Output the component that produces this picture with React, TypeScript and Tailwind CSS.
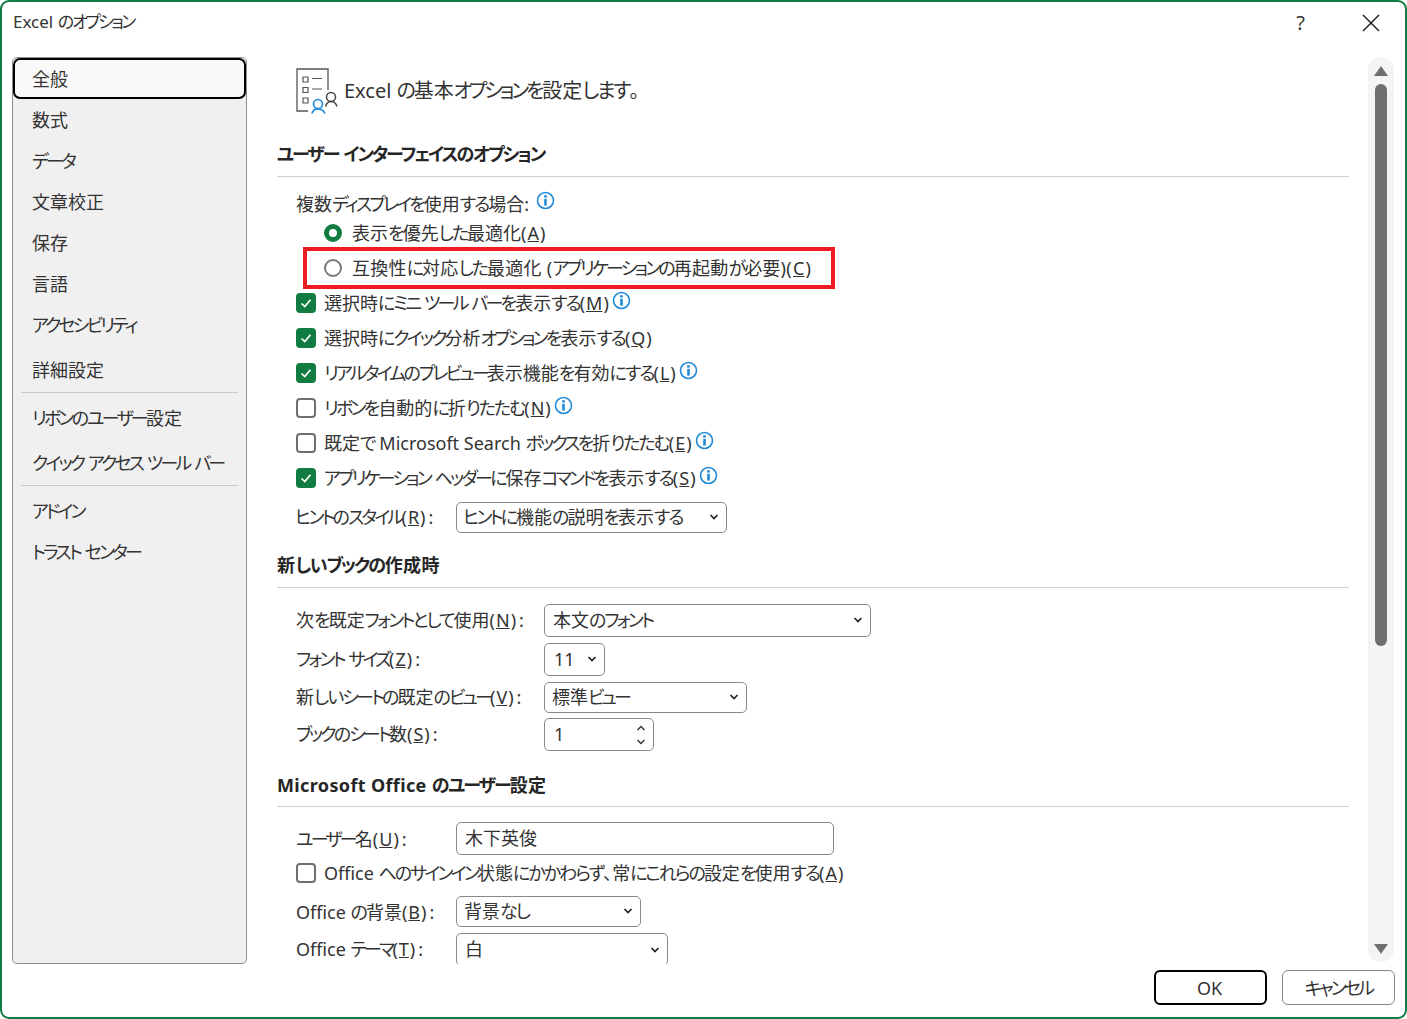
import React from 'react';

// Meiryo UI sets kana narrower than kanji, so kana runs get their own tracking
function T({ s, bold }: { s: string; bold?: boolean }) {
    const parts = s.split(/([\u30A0-\u30FF]+|[\u3040-\u309F]+)/).filter(Boolean);
    return (
        <span>
            {parts.map((p, i) => {
                if (/^[\u30A0-\u30FF]/.test(p)) {
                    return <span key={i} className={bold ? 'tracking-[-0.115em]' : 'tracking-[-0.155em]'}>{p}</span>;
                }
                if (/^[\u3040-\u309F]/.test(p)) {
                    return <span key={i} className={bold ? 'tracking-[-0.07em]' : 'tracking-[-0.11em]'}>{p}</span>;
                }
                return <span key={i} className={bold ? 'tracking-[0.02em]' : ''}>{p}</span>;
            })}
        </span>
    );
}

function Label({ s, k, tail, className }: { s: string; k: string; tail?: boolean; className?: string }) {
    return (
        <span className={className}>
            <T s={s} />(<u className="mx-[1px]">{k}</u>){tail && <span className="ml-[3px]">:</span>}
        </span>
    );
}

function Info() {
    return (
        <svg width="19" height="19" viewBox="0 0 19 19" className="ml-[3px] mb-[4px] shrink-0">
            <circle cx="9.5" cy="9.5" r="8" fill="none" stroke="#1e8ad6" strokeWidth="1.6" />
            <rect x="8.2" y="4.2" width="2.6" height="2.4" fill="#1e8ad6" />
            <rect x="8.2" y="7.8" width="2.6" height="6.8" fill="#1e8ad6" />
        </svg>
    );
}

function Check({ on }: { on: boolean }) {
    if (!on) return <span className="w-5 h-5 rounded-[4px] border-2 border-[#6f6f6f] bg-white shrink-0" />;
    return (
        <span className="w-5 h-5 rounded-[4px] bg-[#107c41] shrink-0 flex items-center justify-center">
            <svg width="14" height="14" viewBox="0 0 14 14">
                <path d="M2.5 7.5 L5.8 10.6 L11.5 3.8" fill="none" stroke="#fff" strokeWidth="1.7" />
            </svg>
        </span>
    );
}

function Chevron() {
    return (
        <svg width="10" height="8" viewBox="0 0 10 8" className="shrink-0">
            <path d="M1.5 2 L5 5.5 L8.5 2" fill="none" stroke="#222" strokeWidth="1.7" />
        </svg>
    );
}

function Select({ className, text }: { className: string; text: string }) {
    return (
        <div className={`flex items-center justify-between border border-[#8a8a8a] rounded-[5px] bg-white pr-[7px] ${className}`}>
            <T s={text} />
            <Chevron />
        </div>
    );
}

function CheckRow({ on, info, s, k }: { on: boolean; info?: boolean; s: string; k: string }) {
    return (
        <div className="h-[35px] ml-[19px] flex items-center gap-[8px]">
            <Check on={on} />
            <div className="flex items-center">
                <Label s={s} k={k} className="pt-[2px]" />
                {info && <Info />}
            </div>
        </div>
    );
}

function Section({ title, className }: { title: string; className: string }) {
    return (
        <div className={`border-b border-[#d0d0d0] pt-[8px] font-bold text-[#262626] ${className}`}>
            <div className="leading-[24px]"><T s={title} bold /></div>
        </div>
    );
}

function SideItem({ label, className }: { label: string; className: string }) {
    return <div className={`flex items-center pl-[19px] whitespace-nowrap ${className}`}><T s={label} /></div>;
}

export default function App() {
    return (
        <div className="w-[1407px] h-[1019px] bg-white overflow-hidden">
            <div className="h-full border-2 border-[#107c41] rounded-[9px] flex flex-col text-[18px] text-[#333] font-['Noto_Sans','Noto_Sans_CJK_JP',sans-serif] [font-feature-settings:'palt']">
                <div className="h-[55px] flex items-start justify-between shrink-0">
                    <div className="ml-[11px] mt-[7px] leading-[26px] text-[17px]"><T s="Excel のオプション" /></div>
                    <div className="flex items-center mt-[11px]">
                        <span className="text-[20px] leading-[20px] mr-[57px]">?</span>
                        <svg width="18" height="18" viewBox="0 0 18 18" className="mr-[25px]">
                            <path d="M1 1 L17 17 M17 1 L1 17" stroke="#222" strokeWidth="1.5" />
                        </svg>
                    </div>
                </div>

                <div className="h-[907px] flex shrink-0">
                    <div className="ml-[10px] w-[235px] shrink-0 bg-[#f0f0f0] border border-[#8f8f8f] rounded-[5px]">
                        <div className="h-[41px] flex items-center pl-[17px] pt-[2px] bg-[#f9f9f9] border-2 border-black rounded-[7px]">全般</div>
                        <SideItem label="数式" className="h-[41px] pt-[2px]" />
                        <SideItem label="データ" className="h-[41px] pt-[2px]" />
                        <SideItem label="文章校正" className="h-[41px] pt-[2px]" />
                        <SideItem label="保存" className="h-[41px] pt-[2px]" />
                        <SideItem label="言語" className="h-[41px] pt-[2px]" />
                        <SideItem label="アクセシビリティ" className="h-[41px] pt-[2px]" />
                        <SideItem label="詳細設定" className="h-[41px] mt-[5px]" />
                        <div className="h-px bg-[#c8c8c8] mx-[8px] mt-[1px]" />
                        <SideItem label="リボンのユーザー設定" className="h-[50px]" />
                        <SideItem label="クイック アクセス ツール バー" className="h-[40px]" />
                        <div className="h-px bg-[#c8c8c8] mx-[8px] mt-[2px]" />
                        <SideItem label="アドイン" className="h-[50px]" />
                        <SideItem label="トラスト センター" className="h-[32px]" />
                    </div>

                    <div className="ml-[30px] w-[1072px] shrink-0 overflow-hidden">
                        <div className="h-[77px] pl-[19px] pt-[11px]">
                            <div className="flex items-center">
                                <svg width="42" height="46" viewBox="0 0 42 46" className="shrink-0">
                                    <path d="M32 22 V1 H1 V43 H12" fill="none" stroke="#555" strokeWidth="1.3" />
                                    <path d="M7 9 h5 v5 h-5 z M7 19.5 h5 v5 h-5 z M7 30 h5 v5 h-5 z" fill="none" stroke="#555" strokeWidth="1.2" />
                                    <path d="M16 10.5 h10 M16 21 h10" stroke="#555" strokeWidth="1.2" />
                                    <circle cx="35" cy="29" r="4.5" fill="none" stroke="#444" strokeWidth="1.5" />
                                    <path d="M29.5 38.5 Q31 33.5 35 33.5 Q39.5 33.5 41 38.5" fill="none" stroke="#444" strokeWidth="1.5" />
                                    <circle cx="22" cy="36" r="4.5" fill="none" stroke="#1e8ad6" strokeWidth="1.7" />
                                    <path d="M16 45.5 Q17 41 22 41 Q27 41 29 45.5" fill="none" stroke="#1e8ad6" strokeWidth="1.7" />
                                </svg>
                                <span className="ml-[6px] text-[20px]"><T s="Excel の基本オプションを設定します。" /></span>
                            </div>
                        </div>

                        <Section title="ユーザー インターフェイスのオプション" className="h-[43px]" />
                        <div className="h-[25px] mt-[13px] ml-[19px] flex items-center">
                            <span className="pt-[4px] pr-[4px]"><T s="複数ディスプレイを使用する場合:" /></span>
                            <Info />
                        </div>
                        <div className="h-[35px] ml-[47px] flex items-center gap-[10px]">
                            <span className="w-[18px] h-[18px] rounded-full border-[5px] border-[#107c41] bg-white shrink-0" />
                            <Label s="表示を優先した最適化" k="A" className="pt-[2px]" />
                        </div>
                        <div className="relative h-[35px] ml-[47px] flex items-center gap-[10px]">
                            <span className="w-[18px] h-[18px] rounded-full border-2 border-[#7a7a7a] bg-white shrink-0" />
                            <Label s="互換性に対応した最適化 (アプリケーションの再起動が必要)" k="C" className="pt-[2px] tracking-[0.25px]" />
                            <div className="absolute left-[-21px] top-[-3px] w-[532px] h-[42px] border-4 border-[#ed1c24]" />
                        </div>
                        <CheckRow on info s="選択時にミニ ツール バーを表示する" k="M" />
                        <CheckRow on s="選択時にクイック分析オプションを表示する" k="Q" />
                        <CheckRow on info s="リアルタイムのプレビュー表示機能を有効にする" k="L" />
                        <CheckRow on={false} info s="リボンを自動的に折りたたむ" k="N" />
                        <CheckRow on={false} info s="既定で Microsoft Search ボックスを折りたたむ" k="E" />
                        <CheckRow on info s="アプリケーション ヘッダーに保存コマンドを表示する" k="S" />
                        <div className="h-[34px] mt-[5px] ml-[18px] flex items-center">
                            <Label s="ヒントのスタイル" k="R" tail className="w-[161px]" />
                            <Select className="w-[271px] h-[31px] pl-[6px]" text="ヒントに機能の説明を表示する" />
                        </div>

                        <Section title="新しいブックの作成時" className="h-[43px] mt-[11px]" />
                        <div className="h-[32px] mt-[16px] ml-[19px] flex items-center">
                            <Label s="次を既定フォントとして使用" k="N" tail className="w-[248px]" />
                            <Select className="w-[327px] h-[33px] pl-[8px]" text="本文のフォント" />
                        </div>
                        <div className="h-[32px] mt-[7px] ml-[19px] flex items-center">
                            <Label s="フォント サイズ" k="Z" tail className="w-[248px]" />
                            <Select className="w-[61px] h-[33px] pl-[9px]" text="11" />
                        </div>
                        <div className="h-[30px] mt-[7px] ml-[19px] flex items-center">
                            <Label s="新しいシートの既定のビュー" k="V" tail className="w-[248px]" />
                            <Select className="w-[203px] h-[31px] pl-[7px]" text="標準ビュー" />
                        </div>
                        <div className="h-[33px] mt-[6px] ml-[19px] flex items-center">
                            <Label s="ブックのシート数" k="S" tail className="w-[248px]" />
                            <div className="w-[110px] h-[33px] flex items-center justify-between border border-[#8a8a8a] rounded-[5px] pl-[9px] pr-[7px]">
                                <span>1</span>
                                <span className="flex flex-col gap-[6px]">
                                    <svg width="10" height="7" viewBox="0 0 10 7"><path d="M1.5 5 L5 1.5 L8.5 5" fill="none" stroke="#333" strokeWidth="1.4" /></svg>
                                    <svg width="10" height="7" viewBox="0 0 10 7"><path d="M1.5 2 L5 5.5 L8.5 2" fill="none" stroke="#333" strokeWidth="1.4" /></svg>
                                </span>
                            </div>
                        </div>

                        <Section title="Microsoft Office のユーザー設定" className="h-[42px] mt-[14px]" />
                        <div className="h-[33px] mt-[15px] ml-[19px] flex items-center">
                            <Label s="ユーザー名" k="U" tail className="w-[160px] pt-[2px]" />
                            <div className="w-[378px] h-[33px] flex items-center border border-[#8a8a8a] rounded-[5px] pl-[8px]">木下英俊</div>
                        </div>
                        <CheckRow on={false} s="Office へのサインイン状態にかかわらず、常にこれらの設定を使用する" k="A" />
                        <div className="h-[32px] mt-[5px] ml-[19px] flex items-center">
                            <Label s="Office の背景" k="B" tail className="w-[160px] pt-[2px]" />
                            <Select className="w-[185px] h-[31px] pl-[7px]" text="背景なし" />
                        </div>
                        <div className="h-[33px] mt-[6px] ml-[19px] flex items-center">
                            <Label s="Office テーマ" k="T" tail className="w-[160px]" />
                            <Select className="w-[212px] h-[33px] pl-[8px]" text="白" />
                        </div>
                    </div>

                    <div className="ml-[19px] w-[26px] h-[905px] shrink-0 bg-[#f4f4f4] rounded-[13px] flex flex-col items-center pt-[9px]">
                        <svg width="14" height="10" viewBox="0 0 14 10" className="shrink-0"><path d="M7 0 L14 10 H0 Z" fill="#6f6f6f" /></svg>
                        <div className="w-[12px] h-[562px] mt-[8px] rounded-full bg-[#6f6f6f]" />
                        <svg width="14" height="10" viewBox="0 0 14 10" className="shrink-0 mt-[298px]"><path d="M0 0 H14 L7 10 Z" fill="#6f6f6f" /></svg>
                    </div>
                </div>

                <div className="flex-1 flex justify-end items-start pt-[6px] pr-[10px] gap-[15px]">
                    <div className="w-[113px] h-[35px] border-2 border-black rounded-[6px] flex items-center justify-center pt-[2px] pr-[2px]">OK</div>
                    <div className="w-[113px] h-[35px] border border-[#8a8a8a] rounded-[6px] flex items-center justify-center pt-[2px]"><T s="キャンセル" /></div>
                </div>
            </div>
        </div>
    );
}
